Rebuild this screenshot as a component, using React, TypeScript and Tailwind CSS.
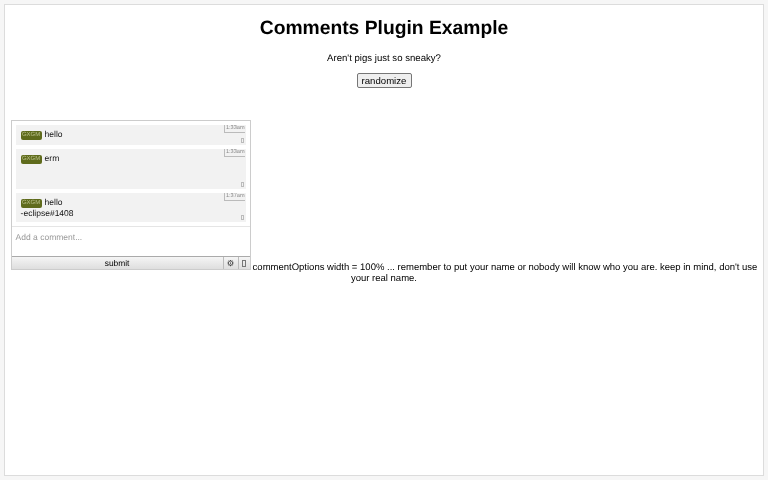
const COMMENTS = [
  { time: '1:33am', lines: ['hello'], height: 'h-[20px]' },
  { time: '1:33am', lines: ['erm'], height: 'h-[40px]' },
  { time: '1:37am', lines: ['hello', '-eclipse#1408'], height: 'h-[29px]' },
];

function Comment({ time, lines, height }: { time: string; lines: string[]; height: string }) {
  return (
    <div className={`relative mb-[4px] bg-[#f2f2f2] ${height} pl-[5px] text-[8.5px] leading-[10px] text-[#111]`}>
      <span className="absolute right-[1px] top-0 border-b border-l border-[#bbb] pl-[1px] text-[5.6px] leading-[7px] text-[#888]">{time}</span>
      <span className="absolute bottom-[2px] right-[2px] h-[5px] w-[3px] border border-[#bbb]" />
      <div className="pt-[4px]">
        <span className="mr-[3px] inline-block h-[9px] w-[21px] rounded-[2px] bg-[#5f6b1c] text-center align-[1px] text-[6px] leading-[9px] text-[#b9c08a]">GXGM</span>
        {lines[0]}
      </div>
      {lines.slice(1).map(l => <div key={l}>{l}</div>)}
    </div>
  );
}

export default function App() {
  return (
    <div className="h-[480px] bg-[#f6f6f6] p-[4px] font-['Liberation_Sans',Arial,sans-serif] [text-rendering:geometricPrecision] [will-change:transform]">
      <div className="h-[472px] border border-[#dcdcdc] bg-white px-[5px] text-center text-[9.6px] leading-[11px] text-black">
        <h1 className="pt-[13px] text-[19.3px] font-bold leading-[22px]">Comments Plugin Example</h1>
        <p className="mt-[13px]">Aren't pigs just so sneaky?</p>
        <button className="mt-[9px] h-[15px] w-[55px] rounded-[2px] border border-[#767676] bg-[#efefef] text-[9.6px] leading-[11px]">randomize</button>
        <div className="mt-[32px] text-[9.5px]">
          <div className="mr-[2px] inline-block w-[240px] overflow-hidden border border-[#ccc] bg-white text-left align-baseline">
            <div className="px-[4px] pt-[4px]">
              {COMMENTS.map(c => <Comment key={c.time + c.lines[0]} {...c} />)}
            </div>
            <div className="h-[30px] border-t border-[#e5e5e5] px-[4px] pt-[5px] text-[8.5px] leading-[10px] text-[#999]">Add a comment...</div>
            <div className="flex h-[13px] border-t border-[#aaa] bg-gradient-to-b from-[#f5f5f5] to-[#dedede] text-[8.4px] leading-[12px]">
              <span className="flex-1 text-center">submit</span>
              <span className="w-[15px] border-l border-[#bbb] text-center text-[#333]">⚙</span>
              <span className="flex w-[12px] items-center justify-center border-l border-[#bbb]">
                <span className="h-[7px] w-[4px] border border-[#777]" />
              </span>
            </div>
          </div>
          commentOptions width = 100% ... remember to put your name or nobody will know who you are. keep in mind, don't use your real name.
        </div>
      </div>
    </div>
  );
}
